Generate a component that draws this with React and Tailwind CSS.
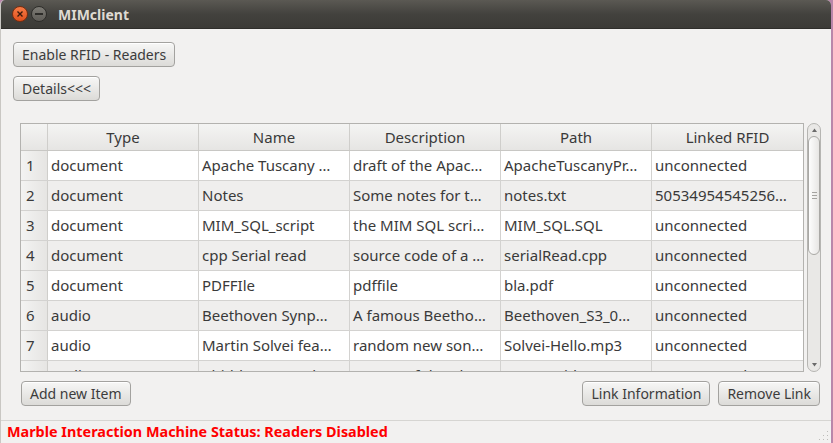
const rows = [
  ["1", "document", "Apache Tuscany …", "draft of the Apac…", "ApacheTuscanyPr…", "unconnected"],
  ["2", "document", "Notes", "Some notes for t…", "notes.txt", "50534954545256…"],
  ["3", "document", "MIM_SQL_script", "the MIM SQL scri…", "MIM_SQL.SQL", "unconnected"],
  ["4", "document", "cpp Serial read", "source code of a …", "serialRead.cpp", "unconnected"],
  ["5", "document", "PDFFIle", "pdffile", "bla.pdf", "unconnected"],
  ["6", "audio", "Beethoven Synp…", "A famous Beetho…", "Beethoven_S3_0…", "unconnected"],
  ["7", "audio", "Martin Solvei fea…", "random new son…", "Solvei-Hello.mp3", "unconnected"],
  ["8", "audio", "Chiddy Bang - Th…", "A song of the Kl…", "MGMT-Kids.mp3", "unconnected"],
];

const headers = ["Type", "Name", "Description", "Path", "Linked RFID"];

function Btn({ children, className = "" }) {
  return (
    <div
      className={
        "h-[25px] px-[8px] flex items-center rounded-[4px] border border-[#a3a29f] bg-gradient-to-b from-[#f7f7f6] to-[#dcdbd8] text-[14px] text-[#3c3c3c] whitespace-nowrap shadow-[inset_0_1px_0_#ffffff] " +
        className
      }
    >
      {children}
    </div>
  );
}

export default function App() {
  return (
    <div
      className="w-[833px] h-[443px] flex bg-[#b986aa] overflow-hidden"
      style={{ fontFamily: '"Noto Sans", "Open Sans", sans-serif' }}
    >
      <div className="w-[831px] h-full flex flex-col bg-[#f2f1f0] rounded-tl-[5px] rounded-tr-[5px] overflow-hidden border-l border-[#c9c7c3]">
        {/* Title bar */}
        <div className="h-[29px] shrink-0 flex items-center bg-gradient-to-b from-[#5b5953] via-[#43423e] to-[#3c3b37] border-b border-[#2f2e2b]">
          <div className="ml-[11px] w-[16px] h-[16px] rounded-full bg-gradient-to-b from-[#f77b45] to-[#e0501c] border border-[#7a2d0f] flex items-center justify-center">
            <svg width="8" height="8" viewBox="0 0 8 8">
              <path d="M1.5 1.5 L6.5 6.5 M6.5 1.5 L1.5 6.5" stroke="#3a1a0c" strokeWidth="1.4" />
            </svg>
          </div>
          <div className="ml-[3px] w-[16px] h-[16px] rounded-full bg-gradient-to-b from-[#7d7b75] to-[#5e5c57] border border-[#2e2d2a] flex items-center justify-center">
            <div className="w-[8px] h-[2px] bg-[#2d2c29]" />
          </div>
          <div className="ml-[11px] text-[14px] font-bold text-[#dfdbd2]">MIMclient</div>
        </div>

        {/* Body */}
        <div className="flex-1 flex flex-col">
          <div className="pl-[12px] pt-[13px] flex flex-col items-start">
            <Btn>Enable RFID - Readers</Btn>
            <Btn className="mt-[9px]">Details&lt;&lt;&lt;</Btn>
          </div>

          {/* Table + scrollbar */}
          <div className="ml-[19px] mt-[22px] flex">
            <div className="w-[784px] h-[249px] border border-[#b3b2af] bg-white overflow-hidden text-[15px] text-[#3a3a3a]">
              <div className="flex h-[27px] border-b border-[#c8c7c4] bg-gradient-to-b from-[#f4f4f3] to-[#e6e5e3]">
                <div className="w-[27px] h-full border-r border-[#cfcecb]" />
                {headers.map((h) => (
                  <div
                    key={h}
                    className="w-[151px] h-full border-r border-[#cfcecb] last:border-r-0 flex items-center justify-center"
                  >
                    {h}
                  </div>
                ))}
              </div>
              {rows.map((r, i) => (
                <div
                  key={r[0]}
                  className={
                    "flex h-[30px] border-b border-[#d3d2d0] " +
                    (i % 2 === 1 ? "bg-[#efeeed]" : "bg-white")
                  }
                >
                  <div className="w-[27px] h-full border-r border-[#cfcecb] bg-gradient-to-r from-[#f3f3f2] to-[#e6e5e3] flex items-center pl-[5px]">
                    {r[0]}
                  </div>
                  {r.slice(1).map((c, j) => (
                    <div
                      key={j}
                      className="w-[151px] h-full border-r border-[#d3d2d0] last:border-r-0 flex items-center pl-[3px] whitespace-nowrap overflow-hidden"
                    >
                      {c}
                    </div>
                  ))}
                </div>
              ))}
            </div>

            {/* Scrollbar */}
            <div className="ml-[3px] w-[14px] h-[249px] rounded-[7px] border border-[#b6b5b2] bg-[#e9e8e6] flex flex-col items-stretch overflow-hidden">
              <div className="h-[12px] shrink-0 flex items-center justify-center">
                <svg width="5" height="4" viewBox="0 0 5 4">
                  <path d="M0 4 L2.5 0.5 L5 4 Z" fill="#6a6a6a" />
                </svg>
              </div>
              <div className="h-[119px] shrink-0 rounded-[6px] border border-[#a9a8a5] bg-gradient-to-r from-[#fdfdfd] to-[#e7e6e4] flex flex-col items-center justify-center gap-[2px]">
                <div className="w-[5px] h-[1px] bg-[#a4a3a0]" />
                <div className="w-[5px] h-[1px] bg-[#a4a3a0]" />
                <div className="w-[5px] h-[1px] bg-[#a4a3a0]" />
              </div>
              <div className="flex-1" />
              <div className="h-[12px] shrink-0 flex items-center justify-center">
                <svg width="5" height="4" viewBox="0 0 5 4">
                  <path d="M0 0 L2.5 3.5 L5 0 Z" fill="#6a6a6a" />
                </svg>
              </div>
            </div>
          </div>

          {/* Bottom buttons */}
          <div className="mt-[9px] flex items-center pl-[20px] pr-[11px]">
            <Btn>Add new Item</Btn>
            <div className="flex-1" />
            <Btn>Link Information</Btn>
            <Btn className="ml-[8px]">Remove Link</Btn>
          </div>
        </div>

        {/* Status bar */}
        <div className="h-[23px] shrink-0 border-t border-[#d6d5d2] flex items-center pl-[6px]">
          <div className="text-[14.4px] font-bold text-[#ff0000] leading-none whitespace-nowrap">
            Marble Interaction Machine Status: Readers Disabled
          </div>
          <div className="flex-1" />
          <svg width="12" height="12" viewBox="0 0 12 12" className="self-end mb-[2px] mr-[2px]">
            {[[10, 2], [10, 6], [6, 6], [10, 10], [6, 10], [2, 10]].map(([x, y], k) => (
              <rect key={k} x={x} y={y} width="1" height="1" fill="#bdbcb9" />
            ))}
          </svg>
        </div>
      </div>
    </div>
  );
}
